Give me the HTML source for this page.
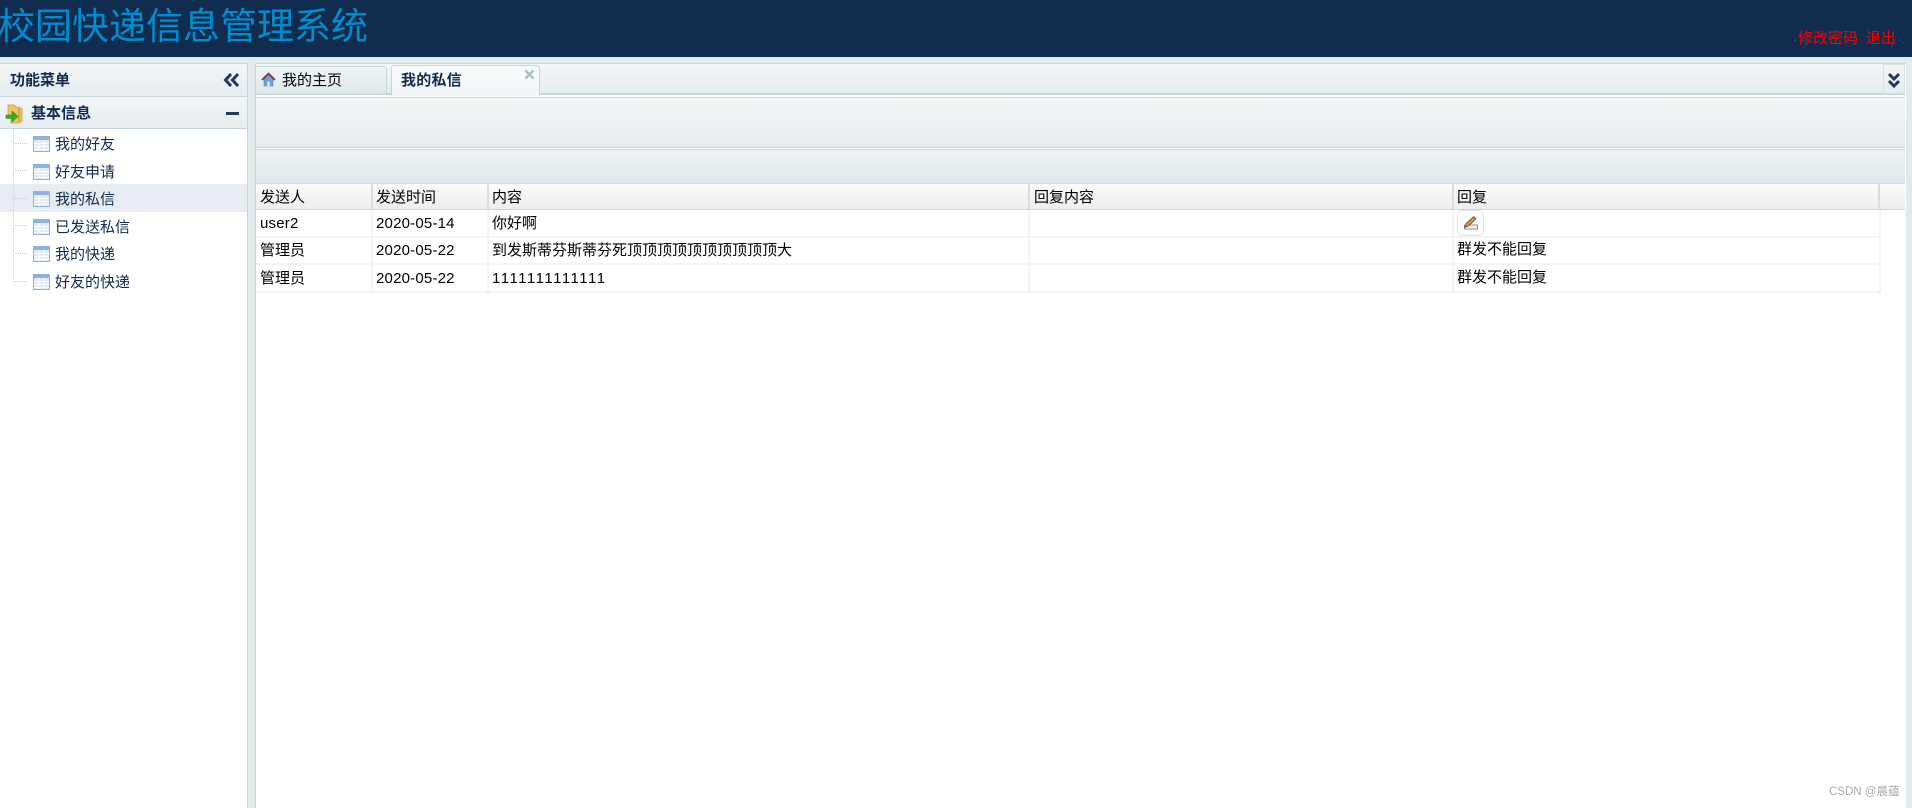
<!DOCTYPE html>
<html lang="zh"><head><meta charset="utf-8"><title>校园快递信息管理系统</title>
<style>
*{box-sizing:border-box}
html,body{margin:0;padding:0}
body{width:1912px;height:808px;overflow:hidden;position:relative;background:#e2eaec;font-family:"Liberation Sans","WenQuanYi Zen Hei","Noto Sans CJK SC",sans-serif;font-size:15px;color:#000}
.a{position:absolute}
.t{position:absolute;white-space:nowrap;line-height:20px}
.grad{background:linear-gradient(#f3f6f7,#e6ecef)}
.nav{color:#102c4e;font-size:15px}
.b{font-weight:bold;color:#102c4e}
.v{position:absolute;width:2px;background:#f4f4f4}
.h{position:absolute;height:2px;left:256px;width:1625px;background:#f4f4f4}
.hv{position:absolute;top:183px;height:27px;width:2px;background:#dcdcdc}
.d{letter-spacing:.2px}
</style></head><body>
<div class="a" style="left:0;top:0;width:1912px;height:57px;background:#102c4e"></div>
<div class="t" style="left:-2px;top:4px;font-size:37px;line-height:46px;color:#008ccf">校园快递信息管理系统</div>
<div class="t" style="left:1798px;top:29px;color:#f00;font-size:15px">修改密码</div>
<div class="t" style="left:1866px;top:29px;color:#f00;font-size:15px">退出</div>

<!-- left panel -->
<div class="a" style="left:0;top:63px;width:248px;height:745px;background:#fff;border-right:1px solid #c5d6da;border-top:1px solid #c5d6da"></div>
<div class="a grad" style="left:0;top:64px;width:247px;height:33px;border-bottom:1px solid #c5d6da"></div>
<div class="t b" style="left:10px;top:71px;font-size:15px">功能菜单</div>
<svg class="a" style="left:223px;top:72px" width="17" height="16" viewBox="0 0 17 16"><path d="M8 2 2.500 8 8 14M15 2 9.500 8 15 14" fill="none" stroke="#1f3a60" stroke-width="3"/></svg>
<div class="a grad" style="left:0;top:97px;width:247px;height:32px;border-bottom:1px solid #c5d6da"></div>
<svg class="a" style="left:5px;top:104px" width="20" height="20" viewBox="0 0 20 20"><path d="M3 1h6l2 2h3l3 2v12l-3 2H6V14L3 12z" fill="#eec65c" stroke="#c9a040" stroke-width=".8"/><path d="M14 4v14" stroke="#b98d2c"/><path d="M1 11h6V7l6 5.500-6 5.500v-3.500H1z" fill="#3da82c" stroke="#2e8a20" stroke-width=".6"/></svg>
<div class="t b" style="left:31px;top:104px;font-size:15px">基本信息</div>
<div class="a" style="left:226px;top:112px;width:13px;height:3px;background:#1f3a60"></div>
<div class="a" style="left:0;top:184px;width:247px;height:28px;background:#e7ebf2"></div>
<div class="a" style="left:13px;top:129px;width:0;height:153px;border-left:1px dotted #ccc"></div>
<div class="a" style="left:15px;top:143px;width:12px;border-top:1px dotted #ccc"></div>
<div class="a" style="left:15px;top:170px;width:12px;border-top:1px dotted #ccc"></div>
<div class="a" style="left:15px;top:198px;width:12px;border-top:1px dotted #ccc"></div>
<div class="a" style="left:15px;top:225px;width:12px;border-top:1px dotted #ccc"></div>
<div class="a" style="left:15px;top:253px;width:12px;border-top:1px dotted #ccc"></div>
<div class="a" style="left:15px;top:281px;width:12px;border-top:1px dotted #ccc"></div>
<svg width="0" height="0" style="position:absolute"><defs><g id="g"><rect x=".5" y=".5" width="16" height="15" fill="#dfe9f7" stroke="#8fb2e2"/><rect x="1" y="1" width="15" height="3" fill="#8fb2e2"/><path d="M1 7.500h15M1 10.500h15M1 13.500h15M6 4v11M11 4v11" stroke="#fff" stroke-width="1"/></g></defs></svg>
<svg class="a" style="left:33px;top:136px" width="17" height="16"><use href="#g"/></svg>
<svg class="a" style="left:33px;top:164px" width="17" height="16"><use href="#g"/></svg>
<svg class="a" style="left:33px;top:191px" width="17" height="16"><use href="#g"/></svg>
<svg class="a" style="left:33px;top:219px" width="17" height="16"><use href="#g"/></svg>
<svg class="a" style="left:33px;top:246px" width="17" height="16"><use href="#g"/></svg>
<svg class="a" style="left:33px;top:274px" width="17" height="16"><use href="#g"/></svg>
<div class="t nav" style="left:55px;top:135px">我的好友</div>
<div class="t nav" style="left:55px;top:163px">好友申请</div>
<div class="t nav" style="left:55px;top:190px">我的私信</div>
<div class="t nav" style="left:55px;top:218px">已发送私信</div>
<div class="t nav" style="left:55px;top:245px">我的快递</div>
<div class="t nav" style="left:55px;top:273px">好友的快递</div>

<!-- right panel -->
<div class="a" style="left:255px;top:63px;width:1651px;height:745px;background:#fff;border-left:1px solid #c5d6da;border-top:1px solid #c5d6da"></div>
<div class="a grad" style="left:256px;top:64px;width:1649px;height:31px;border-bottom:2px solid #c5d6da"></div>
<div class="a grad" style="left:256px;top:66px;width:131px;height:29px;border:1px solid #c5d6da;border-left:none;border-radius:0 4px 0 0;background:linear-gradient(#f1f5f6,#dfe7ea)"></div>
<svg class="a" style="left:261px;top:72px" width="15" height="15" viewBox="0 0 15 15"><path d="M3 7.500V14h3.500v-4h2v4H12V7.500L7.500 3z" fill="#6f9fe0" stroke="#4f7fc6" stroke-width=".6"/><path d="M1 8l6.500-6.500L14 8" fill="none" stroke="#7a3b3b" stroke-width="1.800"/><rect x="6.300" y="9.500" width="2.400" height="4.500" fill="#dfeafa"/></svg>
<div class="t" style="left:282px;top:71px;font-size:15px">我的主页</div>
<div class="a" style="left:391px;top:65px;width:149px;height:31px;border:1px solid #c5d6da;border-bottom:none;border-radius:3px 4px 0 0;background:linear-gradient(#f8fafb,#f2f5f7)"></div>
<div class="t b" style="left:401px;top:71px;font-size:15px;letter-spacing:.2px">我的私信</div>
<svg class="a" style="left:524px;top:69px" width="11" height="11" viewBox="0 0 11 11"><path d="M1.500 1.500l8 8M9.500 1.500l-8 8" stroke="#a9bec9" stroke-width="2.400"/></svg>
<div class="a grad" style="left:1883px;top:64px;width:22px;height:30px;border:1px solid #d5e0e3"></div>
<svg class="a" style="left:1887px;top:72px" width="14" height="17" viewBox="0 0 14 17"><path d="M2 2l5 5 5-5M2 9l5 5 5-5" fill="none" stroke="#1f3a60" stroke-width="3"/></svg>

<div class="a grad" style="left:256px;top:97px;width:1649px;height:51px;border-top:1px solid #c5d6da;border-bottom:1px solid #c5d6da"></div>
<div class="a grad" style="left:256px;top:149px;width:1649px;height:34px;border-top:1px solid #c5d6da;background:linear-gradient(#eef3f4,#e2e9ec)"></div>

<!-- table -->
<div class="a" style="left:256px;top:183px;width:1649px;height:27px;border-top:1px solid #d5dfe2;border-bottom:1px solid #d4d4d4;background:linear-gradient(#fbfbfb,#eeeeee)"></div>
<div class="hv" style="left:371px"></div><div class="hv" style="left:487px"></div><div class="hv" style="left:1028px"></div><div class="hv" style="left:1452px"></div><div class="hv" style="left:1878px"></div>
<div class="t" style="left:260px;top:188px">发送人</div>
<div class="t" style="left:376px;top:188px">发送时间</div>
<div class="t" style="left:492px;top:188px">内容</div>
<div class="t" style="left:1034px;top:188px">回复内容</div>
<div class="t" style="left:1457px;top:188px">回复</div>

<div class="h" style="top:236px"></div><div class="h" style="top:263px"></div><div class="h" style="top:291px"></div>
<div class="v" style="left:371px;top:210px;height:83px"></div>
<div class="v" style="left:487px;top:210px;height:83px"></div>
<div class="v" style="left:1028px;top:210px;height:83px"></div>
<div class="v" style="left:1452px;top:210px;height:83px"></div>
<div class="v" style="left:1879px;top:210px;height:83px"></div>

<div class="t d" style="left:260px;top:214px">user2</div>
<div class="t d" style="left:376px;top:214px">2020-05-14</div>
<div class="t" style="left:492px;top:214px">你好啊</div>
<div class="a" style="left:1457px;top:210px;width:27px;height:26px;border:1px solid #dfe6ee;border-radius:5px;background:#fbfcfd"></div>
<svg class="a" style="left:1462px;top:214px" width="17" height="17" viewBox="0 0 17 17"><rect x="2.500" y="11" width="13" height="4" fill="#eee" stroke="#8a8a8a" stroke-width=".9"/><path d="M3 13 4 9.500 11 3l2.500 2.500L6.500 12z" fill="#c9964a" stroke="#6e4d28" stroke-width=".7"/><path d="M11 3l1-1 2.500 2.500-1 1z" fill="#c9534f"/><path d="M2 14l1-3 2 2z" fill="#3f6b2a"/></svg>

<div class="t" style="left:260px;top:241px">管理员</div>
<div class="t d" style="left:376px;top:241px">2020-05-22</div>
<div class="t" style="left:492px;top:241px">到发斯蒂芬斯蒂芬死顶顶顶顶顶顶顶顶顶顶大</div>
<div class="t" style="left:1457px;top:240px">群发不能回复</div>

<div class="t" style="left:260px;top:269px">管理员</div>
<div class="t d" style="left:376px;top:269px">2020-05-22</div>
<div class="t" style="left:492px;top:269px;letter-spacing:1.500px">1111111111111</div>
<div class="t" style="left:1457px;top:268px">群发不能回复</div>

<div class="t" style="left:1829px;top:782px;font-size:11.500px;color:#a8a8a8">CSDN @晨蕴</div>
</body></html>
